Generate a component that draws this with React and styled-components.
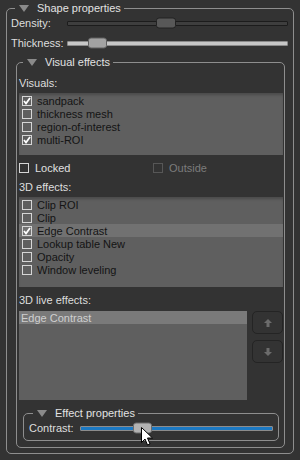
import React from "react";
import styled, { createGlobalStyle } from "styled-components";

const GlobalStyle = createGlobalStyle`
  html, body {
    margin: 0;
    padding: 0;
    background: #333333;
  }
  body {
    font-family: "Liberation Sans", Arial, sans-serif;
    font-size: 11px;
    color: #dedede;
  }
`;

const Page = styled.div`
  position: relative;
  width: 300px;
  height: 460px;
  box-sizing: border-box;
  padding: 1px 6px 0 6px;
  overflow: hidden;
`;

const Group = styled.fieldset`
  display: flex;
  flex-direction: column;
  min-width: 0;
  margin: ${(p) => p.$margin || 0};
  padding: ${(p) => p.$padding || 0};
  border: 1px solid #8e8e8e;
  border-radius: 5px;
`;

const Legend = styled.legend`
  display: flex;
  align-items: center;
  height: 14px;
  line-height: 14px;
  margin-left: ${(p) => p.$offset || 4}px;
  padding: 0 3px;
  color: #e2e2e2;
  svg {
    margin: 0 8px 0 1px;
    flex: none;
  }
`;

const SliderRow = styled.div`
  display: flex;
  align-items: center;
  height: 16px;
  margin-top: ${(p) => p.$gap || 0}px;
`;

const SliderLabel = styled.span`
  flex: none;
  width: ${(p) => p.$w}px;
  white-space: nowrap;
`;

const Track = styled.div`
  position: relative;
  flex: 1;
  height: 5px;
  margin-right: ${(p) => p.$mr || 0}px;
  box-sizing: border-box;
  border: 1px solid ${(p) => p.$border};
  background: ${(p) => p.$fill};
  border-radius: 1px;
`;

const Handle = styled.div`
  position: absolute;
  top: 50%;
  left: ${(p) => p.$left}px;
  width: ${(p) => p.$w}px;
  height: 11px;
  transform: translateY(-50%);
  box-sizing: border-box;
  border: 1px solid ${(p) => p.$border};
  border-radius: 3px;
  background: ${(p) => p.$fill};
`;

const Label = styled.div`
  height: 16px;
  line-height: 16px;
  margin-top: ${(p) => p.$gap || 0}px;
`;

const List = styled.div`
  box-sizing: border-box;
  height: ${(p) => p.$h}px;
  margin-top: 2px;
  padding-top: ${(p) => p.$pt || 0}px;
  background: #5f5f5f;
  box-shadow: inset 0 3px 3px -1px rgba(0, 0, 0, 0.22);
  flex: ${(p) => (p.$grow ? 1 : "none")};
`;

const Item = styled.div`
  display: flex;
  align-items: center;
  gap: 5px;
  height: 13px;
  padding-left: ${(p) => p.$pl || 3}px;
  color: ${(p) => p.$color || "#141414"};
  background: ${(p) => (p.$selected ? p.$hl || "#717171" : "transparent")};
  white-space: nowrap;
`;

const Box = styled.span`
  flex: none;
  display: inline-flex;
  align-items: center;
  justify-content: center;
  width: 10px;
  height: 10px;
  box-sizing: border-box;
  border: 1px solid ${(p) => (p.$dim ? "#575757" : "#d6d6d6")};
`;

const OptionRow = styled.div`
  display: grid;
  grid-template-columns: 134px 1fr;
  height: 14px;
  margin-top: 6px;
`;

const Option = styled.label`
  display: flex;
  align-items: center;
  gap: 6px;
  color: ${(p) => (p.$dim ? "#7c7c7c" : "#e0e0e0")};
`;

const LiveRow = styled.div`
  display: flex;
  gap: 5px;
  height: 89px;
  margin-top: 3px;
`;

const Buttons = styled.div`
  display: flex;
  flex-direction: column;
  gap: 6px;
  width: 31px;
  flex: none;
`;

const ArrowButton = styled.button`
  display: flex;
  align-items: center;
  justify-content: center;
  width: 31px;
  height: 23px;
  padding: 0;
  border: 1px solid #242424;
  border-radius: 5px;
  background: #333333;
`;

const Cursor = styled.svg`
  position: absolute;
  left: 141px;
  top: 427px;
`;

function Triangle() {
  return (
    <svg width="10" height="7" viewBox="0 0 10 7">
      <polygon points="0,0 10,0 5,7" fill="#8a8a8a" />
    </svg>
  );
}

function Check({ on, dim }) {
  return (
    <Box $dim={dim}>
      {on && (
        <svg width="8" height="8" viewBox="0 0 8 8">
          <path d="M1 4 L3 6.5 L7 1" stroke="#ffffff" strokeWidth="1.8" fill="none" />
        </svg>
      )}
    </Box>
  );
}

const visuals = [
  { name: "sandpack", on: true },
  { name: "thickness mesh", on: false },
  { name: "region-of-interest", on: false },
  { name: "multi-ROI", on: true },
];

const effects = [
  { name: "Clip ROI", on: false },
  { name: "Clip", on: false },
  { name: "Edge Contrast", on: true, selected: true },
  { name: "Lookup table New", on: false },
  { name: "Opacity", on: false },
  { name: "Window leveling", on: false },
];

export default function App() {
  return (
    <Page>
      <GlobalStyle />
      <Group $padding="0 4px 5px 4px">
        <Legend $offset={4}>
          <Triangle />
          Shape properties
        </Legend>
        <SliderRow>
          <SliderLabel $w={56}>Density:</SliderLabel>
          <Track $mr={1} $fill="#3e3e3e" $border="#1c1c1c">
            <Handle $left={88} $w={20} $fill="#585858" $border="#222222" />
          </Track>
        </SliderRow>
        <SliderRow $gap={4}>
          <SliderLabel $w={56}>Thickness:</SliderLabel>
          <Track $mr={1} $fill="#c6c6c6" $border="#8a8a8a">
            <Handle $left={20} $w={19} $fill="#a2a2a2" $border="#5e5e5e" />
          </Track>
        </SliderRow>

        <Group $margin="4px 4px 0 5px" $padding="6px 1px 6px 2px">
          <Legend $offset={4}>
            <Triangle />
            Visual effects
          </Legend>
          <Label>Visuals:</Label>
          <List $h={62} $pt={1}>
            {visuals.map((v) => (
              <Item key={v.name}>
                <Check on={v.on} />
                {v.name}
              </Item>
            ))}
          </List>

          <OptionRow>
            <Option>
              <Check />
              Locked
            </Option>
            <Option $dim>
              <Check dim />
              Outside
            </Option>
          </OptionRow>

          <Label $gap={4}>3D effects:</Label>
          <List $h={90} $pt={1}>
            {effects.map((e) => (
              <Item key={e.name} $selected={e.selected}>
                <Check on={e.on} />
                {e.name}
              </Item>
            ))}
          </List>

          <Label $gap={5}>3D live effects:</Label>
          <LiveRow>
            <List $grow $h={89} style={{ marginTop: 0, boxShadow: "none" }}>
              <Item $selected $hl="#7a7a7a" $pl={2} $color="#cfcfcf">
                Edge Contrast
              </Item>
            </List>
            <Buttons>
              <ArrowButton>
                <svg width="8" height="8" viewBox="0 0 8 8">
                  <path d="M4 0 L8 4 L5.5 4 L5.5 8 L2.5 8 L2.5 4 L0 4 Z" fill="#6c6c6c" />
                </svg>
              </ArrowButton>
              <ArrowButton>
                <svg width="8" height="8" viewBox="0 0 8 8">
                  <path d="M4 8 L8 4 L5.5 4 L5.5 0 L2.5 0 L2.5 4 L0 4 Z" fill="#6c6c6c" />
                </svg>
              </ArrowButton>
            </Buttons>
          </LiveRow>

          <Group $margin="6px 4px 0 4px" $padding="0 4px 4px 5px">
            <Legend $offset={4}>
              <Triangle />
              Effect properties
            </Legend>
            <SliderRow>
              <SliderLabel $w={51}>Contrast:</SliderLabel>
              <Track $mr={1} $fill="#1b78c2" $border="#8c8c8c">
                <Handle $left={52} $w={19} $fill="#b2b2b2" $border="#6a6a6a" />
              </Track>
            </SliderRow>
          </Group>
        </Group>
      </Group>

      <Cursor width="12" height="19" viewBox="0 0 12 19">
        <path
          d="M0.5 0.5 L0.5 15.5 L4 12 L6.5 18 L9 17 L6.5 11 L11.5 11 Z"
          fill="#ffffff"
          stroke="#000000"
          strokeWidth="1"
        />
      </Cursor>
    </Page>
  );
}
